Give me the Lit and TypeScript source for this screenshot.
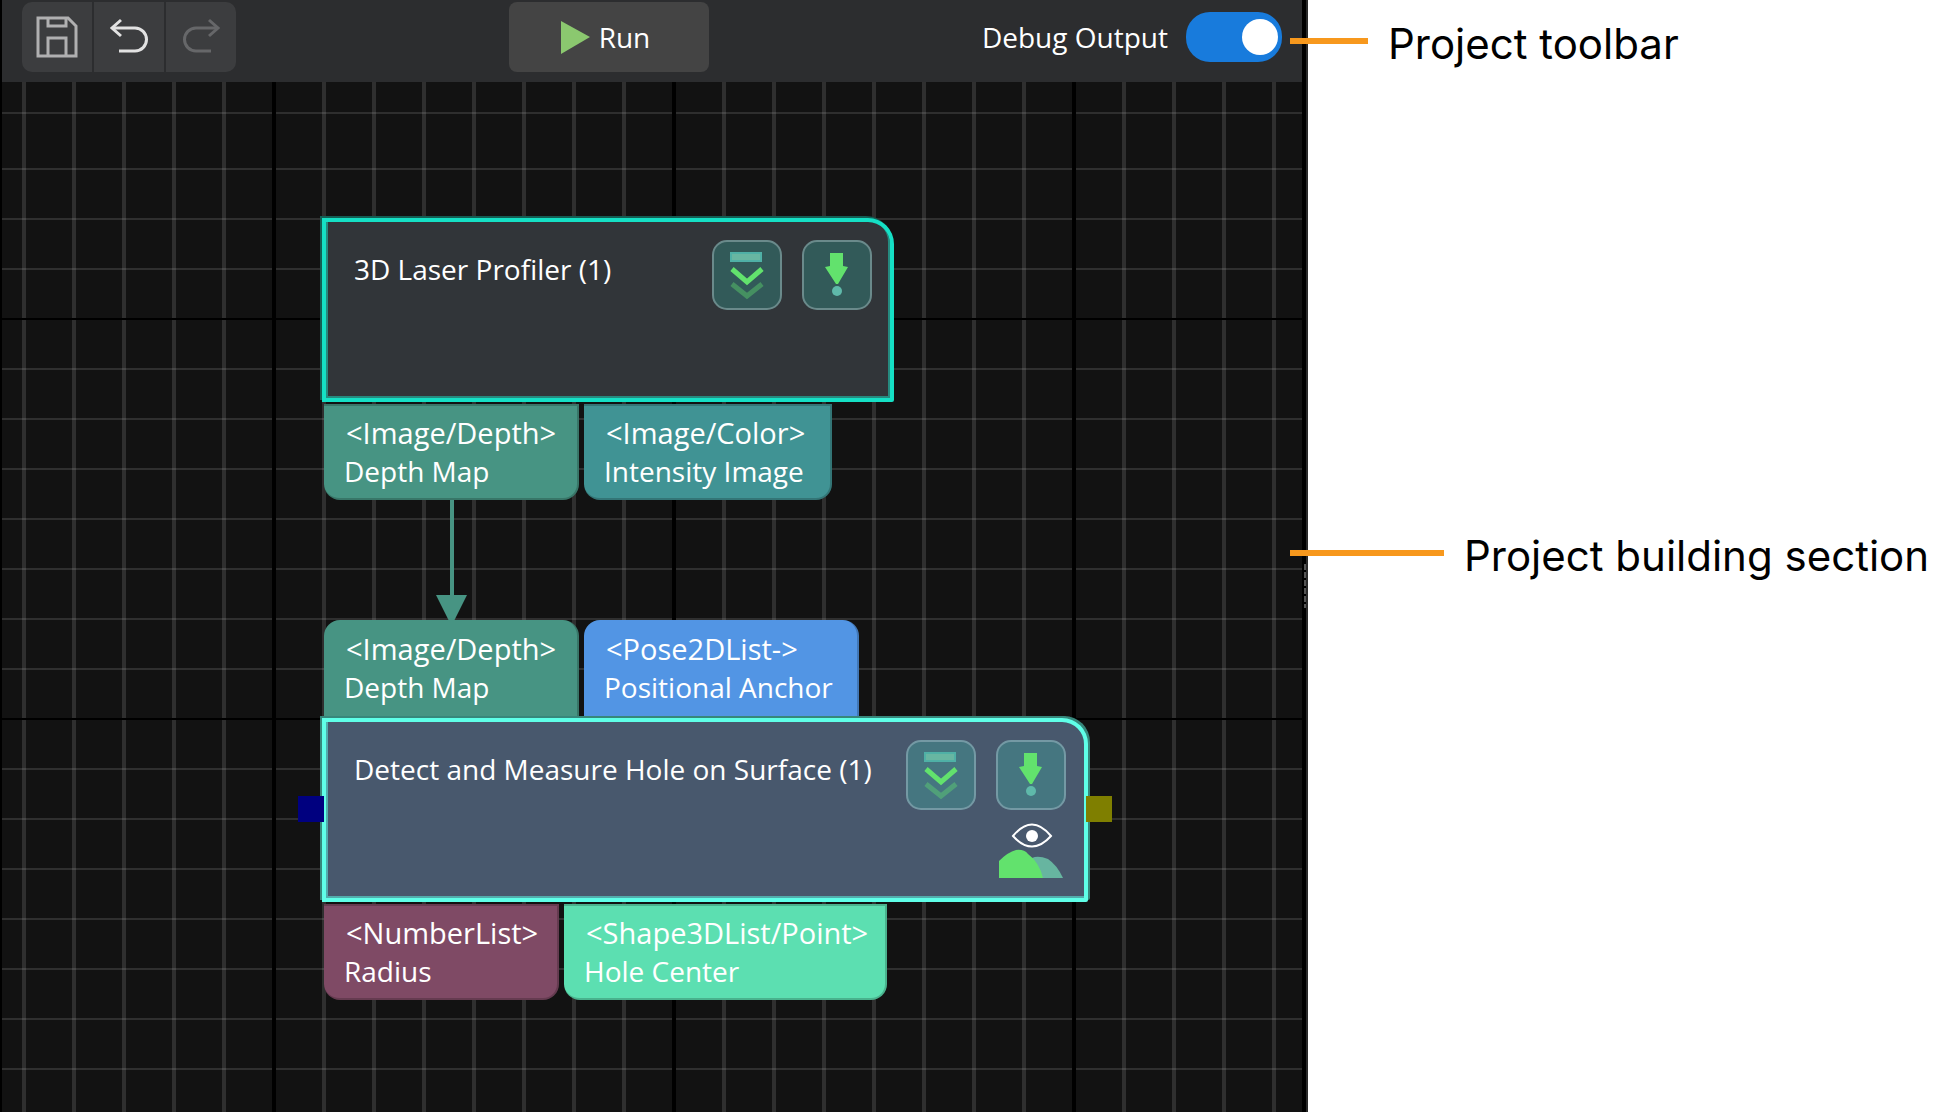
import { LitElement, html, svg, css, nothing } from "lit";
import { customElement, property, state } from "lit/decorators.js";
import { styleMap } from "lit/directives/style-map.js";

interface Port {
  type: string;
  label: string;
  color: string;
  width: number;
}

interface StepNode {
  title: string;
  x: number;
  y: number;
  width: number;
  selected: boolean;
  inputs: Port[];
  outputs: Port[];
}

const STEPS: StepNode[] = [
  {
    title: "3D Laser Profiler (1)",
    x: 320,
    y: 136,
    width: 572,
    selected: false,
    inputs: [],
    outputs: [
      { type: "<Image/Depth>", label: "Depth Map", color: "#479483", width: 255 },
      { type: "<Image/Color>", label: "Intensity Image", color: "#409394", width: 248 },
    ],
  },
  {
    title: "Detect and Measure Hole on Surface (1)",
    x: 320,
    y: 538,
    width: 766,
    selected: true,
    inputs: [
      { type: "<Image/Depth>", label: "Depth Map", color: "#479483", width: 255 },
      { type: "<Pose2DList->", label: "Positional Anchor", color: "#5295e4", width: 275 },
    ],
    outputs: [
      { type: "<NumberList>", label: "Radius", color: "#7f4a65", width: 235 },
      { type: "<Shape3DList/Point>", label: "Hole Center", color: "#5cdfb1", width: 323 },
    ],
  },
];

@customElement("step-node")
export class StepNodeElement extends LitElement {
  @property({ attribute: false }) step!: StepNode;

  static styles = css`
    :host {
      display: block;
      font-family: "Open Sans", "Noto Sans", sans-serif;
      font-size: 28px;
      line-height: 38px;
      color: #fff;
    }
    .ports {
      display: flex;
      gap: 5px;
      padding-left: 2px;
    }
    .port {
      box-sizing: border-box;
      height: 96px;
      padding: 10px 0 10px 20px;
      white-space: nowrap;
      border: 0 solid #0003;
    }
    .port span {
      display: block;
    }
    .port .type {
      padding-left: 2px;
      font-size: 29px;
    }
    .inputs .port {
      border-radius: 16px 16px 0 0;
      border-right-width: 2px;
    }
    .outputs .port {
      border-radius: 0 0 16px 16px;
      border-width: 2px 2px 2px 0;
      padding-top: 8px;
    }
    .inputs {
      margin-bottom: 2px;
    }
    .outputs {
      margin-top: 2px;
    }
    .body {
      --edge: #15e0c5;
      --dim: #268a7f;
      --halo: #145e54;
      --tile: #325a59;
      --rim: #6a8a8b;
      position: relative;
      box-sizing: border-box;
      height: 184px;
      display: flex;
      justify-content: space-between;
      background: #313539;
      border: 4px solid var(--edge);
      border-radius: 0 26px 2px 0;
      padding: 18px 18px 0 28px;
      box-shadow: inset 2px -2px 0 var(--dim), inset -2px -2px 0 var(--dim),
        -2px -2px 0 var(--halo);
    }
    .body.selected {
      --edge: #5fffe8;
      --dim: #52acac;
      --halo: #37877b;
      --tile: #457680;
      --rim: #7499a4;
      background: #48586d;
      box-shadow: inset 2px -2px 0 var(--dim), -2px -2px 0 var(--halo), 2px -2px 0 var(--halo);
    }
    .title {
      margin: 10px 0 0;
      font-size: 28px;
      font-weight: 400;
      white-space: nowrap;
    }
    .tools {
      display: grid;
      grid-template-columns: 70px 70px;
      gap: 8px 20px;
      align-content: start;
    }
    .tile {
      display: block;
      width: 70px;
      height: 70px;
      padding: 0;
      border: 2px solid var(--rim);
      border-radius: 15px;
      background: var(--tile);
    }
    .tile svg {
      display: block;
      width: 66px;
      height: 66px;
    }
    .view {
      grid-column: 2;
      display: block;
      width: 70px;
      height: 64px;
    }
    .plug {
      position: absolute;
      top: 74px;
      width: 26px;
      height: 26px;
    }
    .plug.in {
      left: -28px;
      background: #00007f;
    }
    .plug.out {
      right: -28px;
      background: #7f7f00;
    }
  `;

  private renderPorts(ports: Port[], side: string) {
    return ports.length
      ? html`<div class="ports ${side}">
          ${ports.map(
            (p) => html`<div class="port" style=${styleMap({ background: p.color, width: `${p.width}px` })}>
              <span class="type">${p.type}</span><span>${p.label}</span>
            </div>`
          )}
        </div>`
      : nothing;
  }

  render() {
    const s = this.step;
    return html`
      ${this.renderPorts(s.inputs, "inputs")}
      <div class="body ${s.selected ? "selected" : ""}">
        <h2 class="title">${s.title}</h2>
        <div class="tools">
          <button class="tile" aria-label="Run to here">
            <svg viewBox="0 0 66 66" fill="none">
              <rect x="17" y="11" width="30" height="8" fill="#68b6a2" stroke="#4fb0a6" stroke-width="2" />
              <path d="M18 42L33 54L48 42" stroke="#62e26d" stroke-opacity=".4" stroke-width="5" />
              <path d="M18 27L33 40L48 27" stroke="#62e26d" stroke-width="5" />
            </svg>
          </button>
          <button class="tile" aria-label="Run step">
            <svg viewBox="0 0 66 66">
              <path d="M26 11H39V24L44 25L34 42H32L21 25L26 24Z" fill="#62e26d" />
              <circle cx="33" cy="49" r="5" fill="#5fb9aa" />
            </svg>
          </button>
          ${s.selected
            ? html`<svg class="view" viewBox="0 0 70 64">
                <path d="M17 18Q36 -5 55 18Q36 39 17 18Z" fill="none" stroke="#fff" stroke-width="2" />
                <circle cx="36" cy="18" r="6" fill="#fff" />
                <path d="M36 40Q42 37 52 41Q61 47 67 60H36Z" fill="#67b5a0" />
                <path d="M3 60V43Q12 34 20 32Q28 31 32 36Q43 44 47 60Z" fill="#62e26d" />
              </svg>`
            : nothing}
        </div>
        ${s.selected ? html`<div class="plug in"></div><div class="plug out"></div>` : nothing}
      </div>
      ${this.renderPorts(s.outputs, "outputs")}
    `;
  }
}

@customElement("project-toolbar")
export class ProjectToolbar extends LitElement {
  @state() private debug = true;

  static styles = css`
    :host {
      display: flex;
      justify-content: space-between;
      align-items: center;
      padding: 2px 20px 10px;
      background: #2c2d2f;
      color: #fff;
      font-family: "Open Sans", "Noto Sans", sans-serif;
      font-size: 28px;
      line-height: 38px;
    }
    .group {
      display: flex;
      gap: 2px;
      border-radius: 10px;
      overflow: hidden;
    }
    button {
      height: 70px;
      padding: 0;
      border: 0;
      color: inherit;
      font: inherit;
    }
    .tool {
      width: 70px;
      background: #3c3d3f;
    }
    .tool svg {
      display: block;
    }
    .run {
      display: flex;
      align-items: center;
      justify-content: center;
      gap: 8px;
      width: 200px;
      padding-right: 8px;
      border-radius: 8px;
      background: #444;
    }
    .debug {
      display: flex;
      align-items: center;
      gap: 18px;
    }
    .switch {
      appearance: none;
      display: flex;
      align-items: center;
      box-sizing: border-box;
      width: 96px;
      height: 50px;
      margin: 0;
      padding: 0 4px 0 6px;
      border-radius: 24px;
      background: #666;
    }
    .switch::before {
      content: "";
      width: 36px;
      height: 36px;
      border-radius: 50%;
      background: #fff;
    }
    .switch:checked {
      justify-content: flex-end;
      background: #187bdc;
    }
  `;

  render() {
    return html`
      <div class="group">
        <button class="tool" aria-label="Save">
          <svg width="70" height="70" viewBox="0 0 70 70" fill="none" stroke="#b0b0b1" stroke-width="3">
            <path d="M16 16H46L54 24V54H16Z" />
            <path d="M26 16V24H44V16M26 54V36H44V54" />
          </svg>
        </button>
        <button class="tool" aria-label="Undo">
          <svg width="70" height="70" viewBox="0 0 70 70" fill="none" stroke="#e2e2e2" stroke-width="3">
            <path d="M18 26H41A11 11 0 0 1 41 49H25" />
            <path d="M27 18L18 26L27 34" />
          </svg>
        </button>
        <button class="tool" aria-label="Redo" disabled>
          <svg width="70" height="70" viewBox="0 0 70 70" fill="none" stroke="#666769" stroke-width="3">
            <path d="M52 26H30A11 11 0 0 0 30 49H45" />
            <path d="M43 18L52 26L43 34" />
          </svg>
        </button>
      </div>
      <button class="run">
        <svg width="31" height="35" viewBox="0 0 31 35"><path d="M1 1L30 17L1 34Z" fill="#8bc86f" /></svg>
        Run
      </button>
      <div class="debug">
        <label for="debug">Debug Output</label>
        <input
          id="debug"
          class="switch"
          type="checkbox"
          role="switch"
          .checked=${this.debug}
          @change=${(e: Event) => (this.debug = (e.target as HTMLInputElement).checked)}
        />
      </div>
    `;
  }
}

@customElement("app-root")
export class AppRoot extends LitElement {
  static styles = css`
    :host {
      display: grid;
      grid-template-columns: 327fr 157fr;
      min-height: 100vh;
      background: #fff;
    }
    .panel {
      display: flex;
      flex-direction: column;
      padding: 0 4px 0 2px;
      border-right: 2px solid #2a2a2a;
      background: #000;
    }
    .canvas {
      position: relative;
      flex: 1;
      overflow: hidden;
      background: #121212;
    }
    .grid {
      position: absolute;
      inset: 0;
      width: 100%;
      height: 100%;
    }
    .step {
      position: absolute;
    }
    .notes {
      display: flex;
      flex-direction: column;
      position: relative;
      margin-left: -18px;
      font-family: Inter, "Open Sans", sans-serif;
      font-size: 42px;
      line-height: 48px;
      color: #000;
    }
    .note {
      display: flex;
      align-items: center;
      gap: 20px;
      white-space: nowrap;
    }
    .first {
      padding-top: 20px;
    }
    .second {
      margin-top: 464px;
    }
    .leader {
      flex: none;
      height: 6px;
      width: 78px;
      margin-bottom: 6px;
      background: #f7981d;
    }
    .long {
      width: 154px;
    }
    .handle {
      position: absolute;
      left: 14px;
      top: 564px;
      width: 2px;
      height: 44px;
      background: repeating-linear-gradient(#555 0 6px, #000 6px 8px);
    }
  `;

  private renderGrid() {
    return svg`
      <defs>
        <pattern id="cols" x="20" width="50" height="50" patternUnits="userSpaceOnUse">
          <rect width="4" height="50" fill="#fff" fill-opacity=".12" />
        </pattern>
        <pattern id="rows" y="36" width="50" height="50" patternUnits="userSpaceOnUse">
          <rect width="50" height="2" fill="#fff" fill-opacity=".12" />
        </pattern>
        <pattern id="majorRows" y="236" width="400" height="400" patternUnits="userSpaceOnUse">
          <rect width="400" height="2" fill="#000" />
        </pattern>
        <pattern id="majorCols" x="270" width="400" height="400" patternUnits="userSpaceOnUse">
          <rect width="4" height="400" fill="#000" />
        </pattern>
      </defs>
      <rect y="30" width="100%" height="2" fill="#fff" fill-opacity=".12" />
      <rect y="80" width="100%" height="100%" fill="url(#rows)" />
      <rect width="100%" height="100%" fill="url(#cols)" />
      <rect y="80" width="100%" height="100%" fill="url(#majorRows)" />
      <rect width="100%" height="100%" fill="url(#majorCols)" />
      <path d="M450 418V518" stroke="#479483" stroke-width="4" />
      <path d="M434 513H465L452 539H447Z" fill="#479483" />
    `;
  }

  render() {
    return html`
      <main class="panel">
        <project-toolbar></project-toolbar>
        <div class="canvas">
          <svg class="grid">${this.renderGrid()}</svg>
          ${STEPS.map(
            (s) => html`<step-node
              class="step"
              .step=${s}
              style=${styleMap({ left: `${s.x}px`, top: `${s.y}px`, width: `${s.width}px` })}
            ></step-node>`
          )}
        </div>
      </main>
      <aside class="notes">
        <div class="note first"><span class="leader"></span>Project toolbar</div>
        <div class="note second"><span class="leader long"></span>Project building section</div>
        <div class="handle"></div>
      </aside>
    `;
  }
}
